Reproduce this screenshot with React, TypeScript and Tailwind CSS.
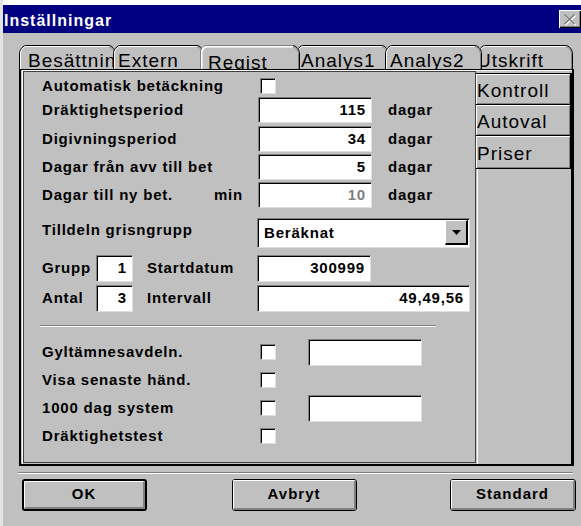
import React from "react";

// Classic 3D edge helpers
const sunken =
  "bg-white border-t border-l border-t-[#808080] border-l-[#808080] border-b border-r border-b-[#dfdfdf] border-r-[#dfdfdf] shadow-[inset_1px_1px_0_#000]";

function TabShape({ w, selected, front }: { w: number; selected?: boolean; front?: boolean }) {
  if (!front) {
    return (
      <svg className="absolute left-0 top-0" width={w} height={24} viewBox={`0 0 ${w} 24`}>
        <path
          d={`M0 24 V9 C0 5 3 0.5 6.5 0 H${w - 6.5} C${w - 3} 0.5 ${w} 5 ${w} 9 V24 Z`}
          fill="#c0c0c0"
        />
      </svg>
    );
  }
  return (
    <svg className="absolute left-0 top-0" width={w} height={24} viewBox={`0 0 ${w} 24`} fill="none">
      <path
        d={`M0.5 24 V9 C0.5 5 3 1.5 6.5 0.5 H${w - 6.5} C${w - 3} 1.5 ${w - 0.5} 5 ${w - 0.5} 9 V24`}
        stroke="#000"
      />
      <path
        d={`M1.5 24 V9 C1.5 5.5 3.5 2.5 6.5 1.5 H${w - 7}`}
        stroke="#fff"
        strokeWidth={selected ? 2 : 1}
      />
      <path d={`M${w - 7} 1.5 C${w - 4} 2.5 ${w - 1.5} 5.5 ${w - 1.5} 9 V24`} stroke="#808080" />
    </svg>
  );
}

function Tab({
  label,
  w,
  cls,
  textCls,
  selected,
}: {
  label: string;
  w: number;
  cls: string;
  textCls: string;
  selected?: boolean;
}) {
  return (
    <div className={`relative h-[24px] shrink-0 overflow-hidden ${cls}`}>
      <TabShape w={w} selected={selected} />
      <span
        className={`relative block whitespace-nowrap text-[19px] leading-[19px] tracking-[1px] ${textCls}`}
      >
        {label}
      </span>
      <TabShape w={w} selected={selected} front />
    </div>
  );
}

function Field({ value, cls, muted }: { value: string; cls: string; muted?: boolean }) {
  return (
    <div className={`flex items-center justify-end pr-[5px] ${sunken} ${cls} ${muted ? "text-[#808080]" : ""}`}>
      {value}
    </div>
  );
}

function Check() {
  return <div className={`h-[16px] w-[16px] shrink-0 ${sunken}`} />;
}

function SideButton({ label, cls }: { label: string; cls: string }) {
  return (
    <div
      className={`flex items-center border-b border-r-2 border-black pl-[1px] pt-[2px] text-[19px] leading-[19px] tracking-[1px] shadow-[inset_1px_1px_0_#fff,inset_-1px_-1px_0_#808080] ${cls}`}
    >
      {label}
    </div>
  );
}

function DlgButton({ label, cls, isDefault }: { label: string; cls: string; isDefault?: boolean }) {
  return (
    <div className={`flex h-[32px] rounded-[3px] border-black ${isDefault ? "border-2" : "border"} ${cls}`}>
      <div className="flex flex-1 items-center justify-center rounded-[2px] border-t border-l border-white border-r-2 border-b-2 border-r-[#808080] border-b-[#808080] text-[15px] font-bold tracking-[1px]">
        {label}
      </div>
    </div>
  );
}

export default function App() {
  return (
    <div className="h-[526px] w-[581px] overflow-hidden border-l-[3px] border-l-[#e4e4e4] bg-[#c0c0c0] font-['Liberation_Sans',Arial,sans-serif] text-black">
      <div className="h-[5px] bg-white" />

      {/* title bar */}
      <div className="flex h-[28px] items-center bg-[#000080] pl-[1px]">
        <span className="pt-[3px] text-[16px] font-bold leading-none tracking-[1px] text-white">Inställningar</span>
        <div className="ml-auto flex h-[18px] w-[22px] items-center justify-center bg-[#c0c0c0] shadow-[inset_1px_1px_0_#fff,inset_-1px_-1px_0_#000,inset_-2px_-2px_0_#808080]">
          <svg width="14" height="13" viewBox="0 0 14 13">
            <path d="M2.5 2.5 L12.5 12 M12.5 2.5 L2.5 12" stroke="#fff" strokeWidth="1.6" />
            <path d="M1.5 1.5 L11.5 11 M11.5 1.5 L1.5 11" stroke="#808080" strokeWidth="1.6" />
          </svg>
        </div>
      </div>

      {/* tab strip */}
      <div className="ml-[16px] mt-[12px] flex h-[24px]">
        <Tab label="Besättning" w={97} cls="z-[1] w-[97px]" textCls="pl-[9px] pt-[6px]" />
        <Tab label="Extern" w={91} cls="z-[2] -ml-[3px] w-[91px]" textCls="pl-[5px] pt-[6px]" />
        <Tab label="Regist" w={100} cls="z-[6] -ml-[4px] w-[100px]" textCls="pl-[8px] pt-[8px]" selected />
        <Tab label="Analys1" w={93} cls="z-[3] -ml-[4px] w-[93px]" textCls="pl-[5px] pt-[6px]" />
        <Tab label="Analys2" w={97} cls="z-[5] -ml-[4px] w-[97px]" textCls="pl-[5px] pt-[6px]" />
        <Tab label="Utskrift" w={95} cls="z-[4] -ml-[4px] w-[95px]" textCls="-ml-[1px] pt-[6px]" />
      </div>

      {/* notebook frame */}
      <div className="ml-[16px] flex h-[397px] w-[555px] border-t border-l-2 border-r-2 border-b-2 border-black">
        <div className="ml-[1px] flex flex-1 border-l border-t border-white">
          {/* page content */}
          <div className="flex h-[392px] w-[453px] flex-col border border-[#404040] pl-[18px] pt-[4px] text-[15px] font-bold tracking-[0.8px]">
            <div className="flex h-[20px] items-center">
              <span className="w-[218px] shrink-0">Automatisk betäckning</span>
              <Check />
            </div>
            <div className="mt-[1px] flex h-[26px] items-center">
              <span className="w-[216px] shrink-0">Dräktighetsperiod</span>
              <Field value="115" cls="h-[26px] w-[114px]" />
              <span className="ml-[16px]">dagar</span>
            </div>
            <div className="mt-[3px] flex h-[26px] items-center">
              <span className="w-[216px] shrink-0">Digivningsperiod</span>
              <Field value="34" cls="h-[26px] w-[114px]" />
              <span className="ml-[16px]">dagar</span>
            </div>
            <div className="mt-[2px] flex h-[26px] items-center">
              <span className="w-[216px] shrink-0">Dagar från avv till bet</span>
              <Field value="5" cls="h-[26px] w-[114px]" />
              <span className="ml-[16px]">dagar</span>
            </div>
            <div className="mt-[2px] flex h-[26px] items-center">
              <span className="flex w-[216px] shrink-0 justify-between pr-[15px]">
                <span>Dagar till ny bet.</span>
                <span>min</span>
              </span>
              <Field value="10" cls="h-[26px] w-[114px]" muted />
              <span className="ml-[16px]">dagar</span>
            </div>

            <div className="mt-[10px] flex h-[30px] items-center">
              <span className="mb-[5px] w-[215px] shrink-0">Tilldeln grisngrupp</span>
              <div className={`flex h-[30px] w-[213px] items-start ${sunken}`}>
                <span className="self-center pl-[6px]">Beräknat</span>
                <div className="ml-auto mr-[1px] mt-[1px] flex h-[25px] w-[23px] items-center justify-center border-t border-l border-white border-r-2 border-b-2 border-r-black border-b-black bg-[#c0c0c0]">
                  <svg width="9" height="5" viewBox="0 0 9 5">
                    <polygon points="0,0 9,0 4.5,5" fill="#000" />
                  </svg>
                </div>
              </div>
            </div>

            <div className="mt-[7px] flex h-[27px] items-center">
              <span className="w-[54px] shrink-0">Grupp</span>
              <Field value="1" cls="h-[27px] w-[37px]" />
              <span className="ml-[14px] w-[110px] shrink-0">Startdatum</span>
              <Field value="300999" cls="h-[27px] w-[114px]" />
            </div>
            <div className="mt-[3px] flex h-[27px] items-center">
              <span className="w-[54px] shrink-0">Antal</span>
              <Field value="3" cls="h-[27px] w-[37px]" />
              <span className="ml-[14px] w-[110px] shrink-0">Intervall</span>
              <Field value="49,49,56" cls="h-[27px] w-[213px]" />
            </div>

            <div className="-ml-[2px] mt-[13px] h-[2px] w-[396px] border-t border-b border-t-[#808080] border-b-white" />

            <div className="mt-[11px] flex h-[28px] items-center">
              <span className="w-[218px] shrink-0">Gyltämnesavdeln.</span>
              <Check />
              <Field value="" cls="ml-[32px] h-[27px] w-[114px]" />
            </div>
            <div className="flex h-[28px] items-center">
              <span className="w-[218px] shrink-0">Visa senaste händ.</span>
              <Check />
            </div>
            <div className="flex h-[28px] items-center">
              <span className="w-[218px] shrink-0">1000 dag system</span>
              <Check />
              <Field value="" cls="ml-[32px] h-[27px] w-[114px]" />
            </div>
            <div className="flex h-[28px] items-center">
              <span className="w-[218px] shrink-0">Dräktighetstest</span>
              <Check />
            </div>
          </div>

          {/* side tabs */}
          <div className="flex flex-1 flex-col pt-[2px]">
            <SideButton label="Kontroll" cls="h-[32px] border-t" />
            <SideButton label="Autoval" cls="h-[31px]" />
            <SideButton label="Priser" cls="h-[33px]" />
            <div className="ml-[1px] flex-1 border-l border-r border-l-white border-r-black" />
          </div>
        </div>
      </div>

      {/* separator */}
      <div className="ml-[15px] mt-[6px] h-[2px] w-[555px] border-t border-b border-t-[#808080] border-b-white" />

      {/* dialog buttons */}
      <div className="mt-[5px] flex pl-[19px]">
        <DlgButton label="OK" cls="w-[125px]" isDefault />
        <DlgButton label="Avbryt" cls="ml-[85px] w-[125px]" />
        <DlgButton label="Standard" cls="ml-[93px] w-[126px]" />
      </div>
    </div>
  );
}
